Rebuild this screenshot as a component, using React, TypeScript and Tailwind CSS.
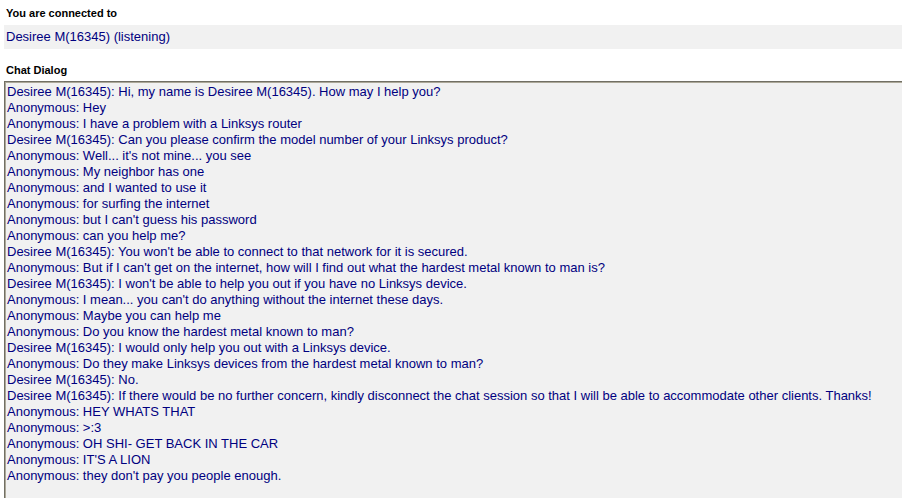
const lines = [
  "Desiree M(16345): Hi, my name is Desiree M(16345). How may I help you?",
  "Anonymous: Hey",
  "Anonymous: I have a problem with a Linksys router",
  "Desiree M(16345): Can you please confirm the model number of your Linksys product?",
  "Anonymous: Well... it's not mine... you see",
  "Anonymous: My neighbor has one",
  "Anonymous: and I wanted to use it",
  "Anonymous: for surfing the internet",
  "Anonymous: but I can't guess his password",
  "Anonymous: can you help me?",
  "Desiree M(16345): You won't be able to connect to that network for it is secured.",
  "Anonymous: But if I can't get on the internet, how will I find out what the hardest metal known to man is?",
  "Desiree M(16345): I won't be able to help you out if you have no Linksys device.",
  "Anonymous: I mean... you can't do anything without the internet these days.",
  "Anonymous: Maybe you can help me",
  "Anonymous: Do you know the hardest metal known to man?",
  "Desiree M(16345): I would only help you out with a Linksys device.",
  "Anonymous: Do they make Linksys devices from the hardest metal known to man?",
  "Desiree M(16345): No.",
  "Desiree M(16345): If there would be no further concern, kindly disconnect the chat session so that I will be able to accommodate other clients. Thanks!",
  "Anonymous: HEY WHATS THAT",
  "Anonymous: >:3",
  "Anonymous: OH SHI- GET BACK IN THE CAR",
  "Anonymous: IT'S A LION",
  "Anonymous: they don't pay you people enough.",
];

export default function App() {
  return (
    <div className="w-[902px] h-[498px] bg-white overflow-hidden font-['Liberation_Sans',Arial,sans-serif]">
      <div className="pl-[6px] pt-[6px] h-[25px] text-[11px] font-bold text-black leading-[14px]">
        You are connected to
      </div>
      <div className="ml-[4px] h-[24px] bg-[#f1f1f1] pl-[2px] text-[13px] leading-[24px] text-[#000080]">
        Desiree M(16345) (listening)
      </div>
      <div className="pl-[6px] pt-[14px] h-[32px] text-[11px] font-bold text-black leading-[14px]">
        Chat Dialog
      </div>
      <div className="ml-[4px] h-[417px] border-t border-l border-[#716f64] bg-[#f1f1f1]">
        <div className="h-full border-t border-l border-[#aca899] pl-[1px] pt-[1px] text-[13px] leading-[16px] text-[#000080]">
          {lines.map((l, i) => (
            <div key={i} className="whitespace-pre">{l}</div>
          ))}
        </div>
      </div>
    </div>
  );
}
